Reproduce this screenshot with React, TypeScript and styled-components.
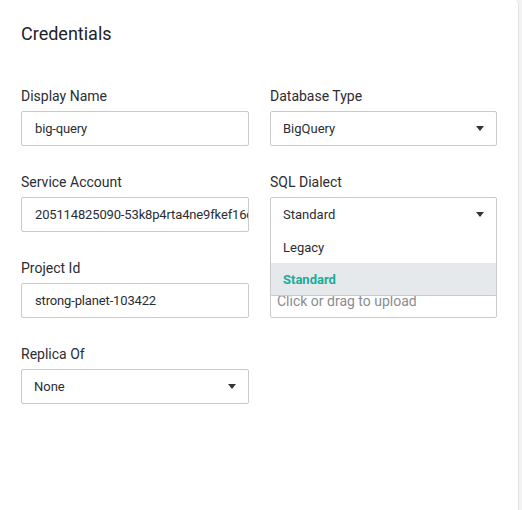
import React from 'react'
import styled, { createGlobalStyle } from 'styled-components'

const GlobalStyle = createGlobalStyle`
  html, body {
    margin: 0;
    padding: 0;
    background: #f3f3f4;
    font-family: Roboto, "Liberation Sans", sans-serif;
    color: #2c2d33;
  }
`

export default function App () {
  return (
    <>
      <GlobalStyle />
      <Panel>
        <Title>Credentials</Title>
        <FormGrid>
          <Field>
            <Label>Display Name</Label>
            <TextBox>big-query</TextBox>
          </Field>
          <Field>
            <Label>Database Type</Label>
            <SelectBox>
              <span>BigQuery</span>
              <Caret />
            </SelectBox>
          </Field>
          <Field>
            <Label>Service Account</Label>
            <TextBox>205114825090-53k8p4rta4ne9fkef16c8vs0shjrv96s</TextBox>
          </Field>
          <Field>
            <Label>SQL Dialect</Label>
            <SelectBox open>
              <span>Standard</span>
              <Caret />
            </SelectBox>
            <Menu>
              <MenuItem>Legacy</MenuItem>
              <MenuItem selected>Standard</MenuItem>
            </Menu>
          </Field>
          <Field>
            <Label>Project Id</Label>
            <TextBox>strong-planet-103422</TextBox>
          </Field>
          <Field>
            {/* label sits under the open menu */}
            <Label />
            <UploadBox>Click or drag to upload</UploadBox>
          </Field>
          <Field>
            <Label>Replica Of</Label>
            <SelectBox>
              <span>None</span>
              <Caret />
            </SelectBox>
          </Field>
        </FormGrid>
      </Panel>
    </>
  )
}

function Caret () {
  return (
    <CaretIcon width='8' height='5' viewBox='0 0 8 5'>
      <path d='M0 0 L8 0 L4 5 Z' fill='#33343a' />
    </CaretIcon>
  )
}

const Panel = styled.div`
  box-sizing: border-box;
  width: 519px;
  height: 510px;
  background: #fff;
  border-right: 1px solid #e2e2e4;
  border-top-right-radius: 5px;
  padding: 22px 0 0 21px;
`

const Title = styled.h2`
  margin: 0;
  font-size: 18px;
  font-weight: 400;
  line-height: 24px;
  color: #222328;
`

const FormGrid = styled.div`
  display: grid;
  grid-template-columns: 228px 227px;
  column-gap: 21px;
  row-gap: 28px;
  margin-top: 42px;
`

const Field = styled.div`
  position: relative;
  display: flex;
  flex-direction: column;
`

const Label = styled.label`
  font-size: 14px;
  line-height: 16px;
  height: 16px;
  margin-bottom: 7px;
  color: #2c2d33;
`

const Box = styled.div`
  box-sizing: border-box;
  height: 35px;
  border: 1px solid #c9cacd;
  border-radius: 2px;
  background: #fff;
  display: flex;
  align-items: center;
  font-size: 13px;
  color: #2c2d33;
  white-space: nowrap;
  overflow: hidden;
`

const TextBox = styled(Box)`
  padding: 0 13px;
  letter-spacing: -0.15px;
`

const SelectBox = styled(Box)<{ open?: boolean }>`
  justify-content: space-between;
  padding: 0 12px 0 12px;
  border-radius: ${p => (p.open ? '2px 2px 0 0' : '2px')};
`

const UploadBox = styled(Box)`
  padding: 0 6px;
  padding-top: 1px;
  font-size: 14px;
  color: #8b8c90;
`

const CaretIcon = styled.svg`
  flex-shrink: 0;
`

const Menu = styled.ul`
  position: absolute;
  top: 57px;
  left: 0;
  right: 0;
  z-index: 2;
  margin: 0;
  padding: 0;
  list-style: none;
  background: #fff;
  border: 1px solid #c9cacd;
  border-top: none;
  border-radius: 0 0 2px 2px;
`

const MenuItem = styled.li<{ selected?: boolean }>`
  height: 32px;
  display: flex;
  align-items: center;
  padding: 0 12px;
  font-size: 13px;
  font-weight: ${p => (p.selected ? 700 : 400)};
  color: ${p => (p.selected ? '#1aab99' : '#2c2d33')};
  background: ${p => (p.selected ? '#e5e9ec' : '#fff')};
`
